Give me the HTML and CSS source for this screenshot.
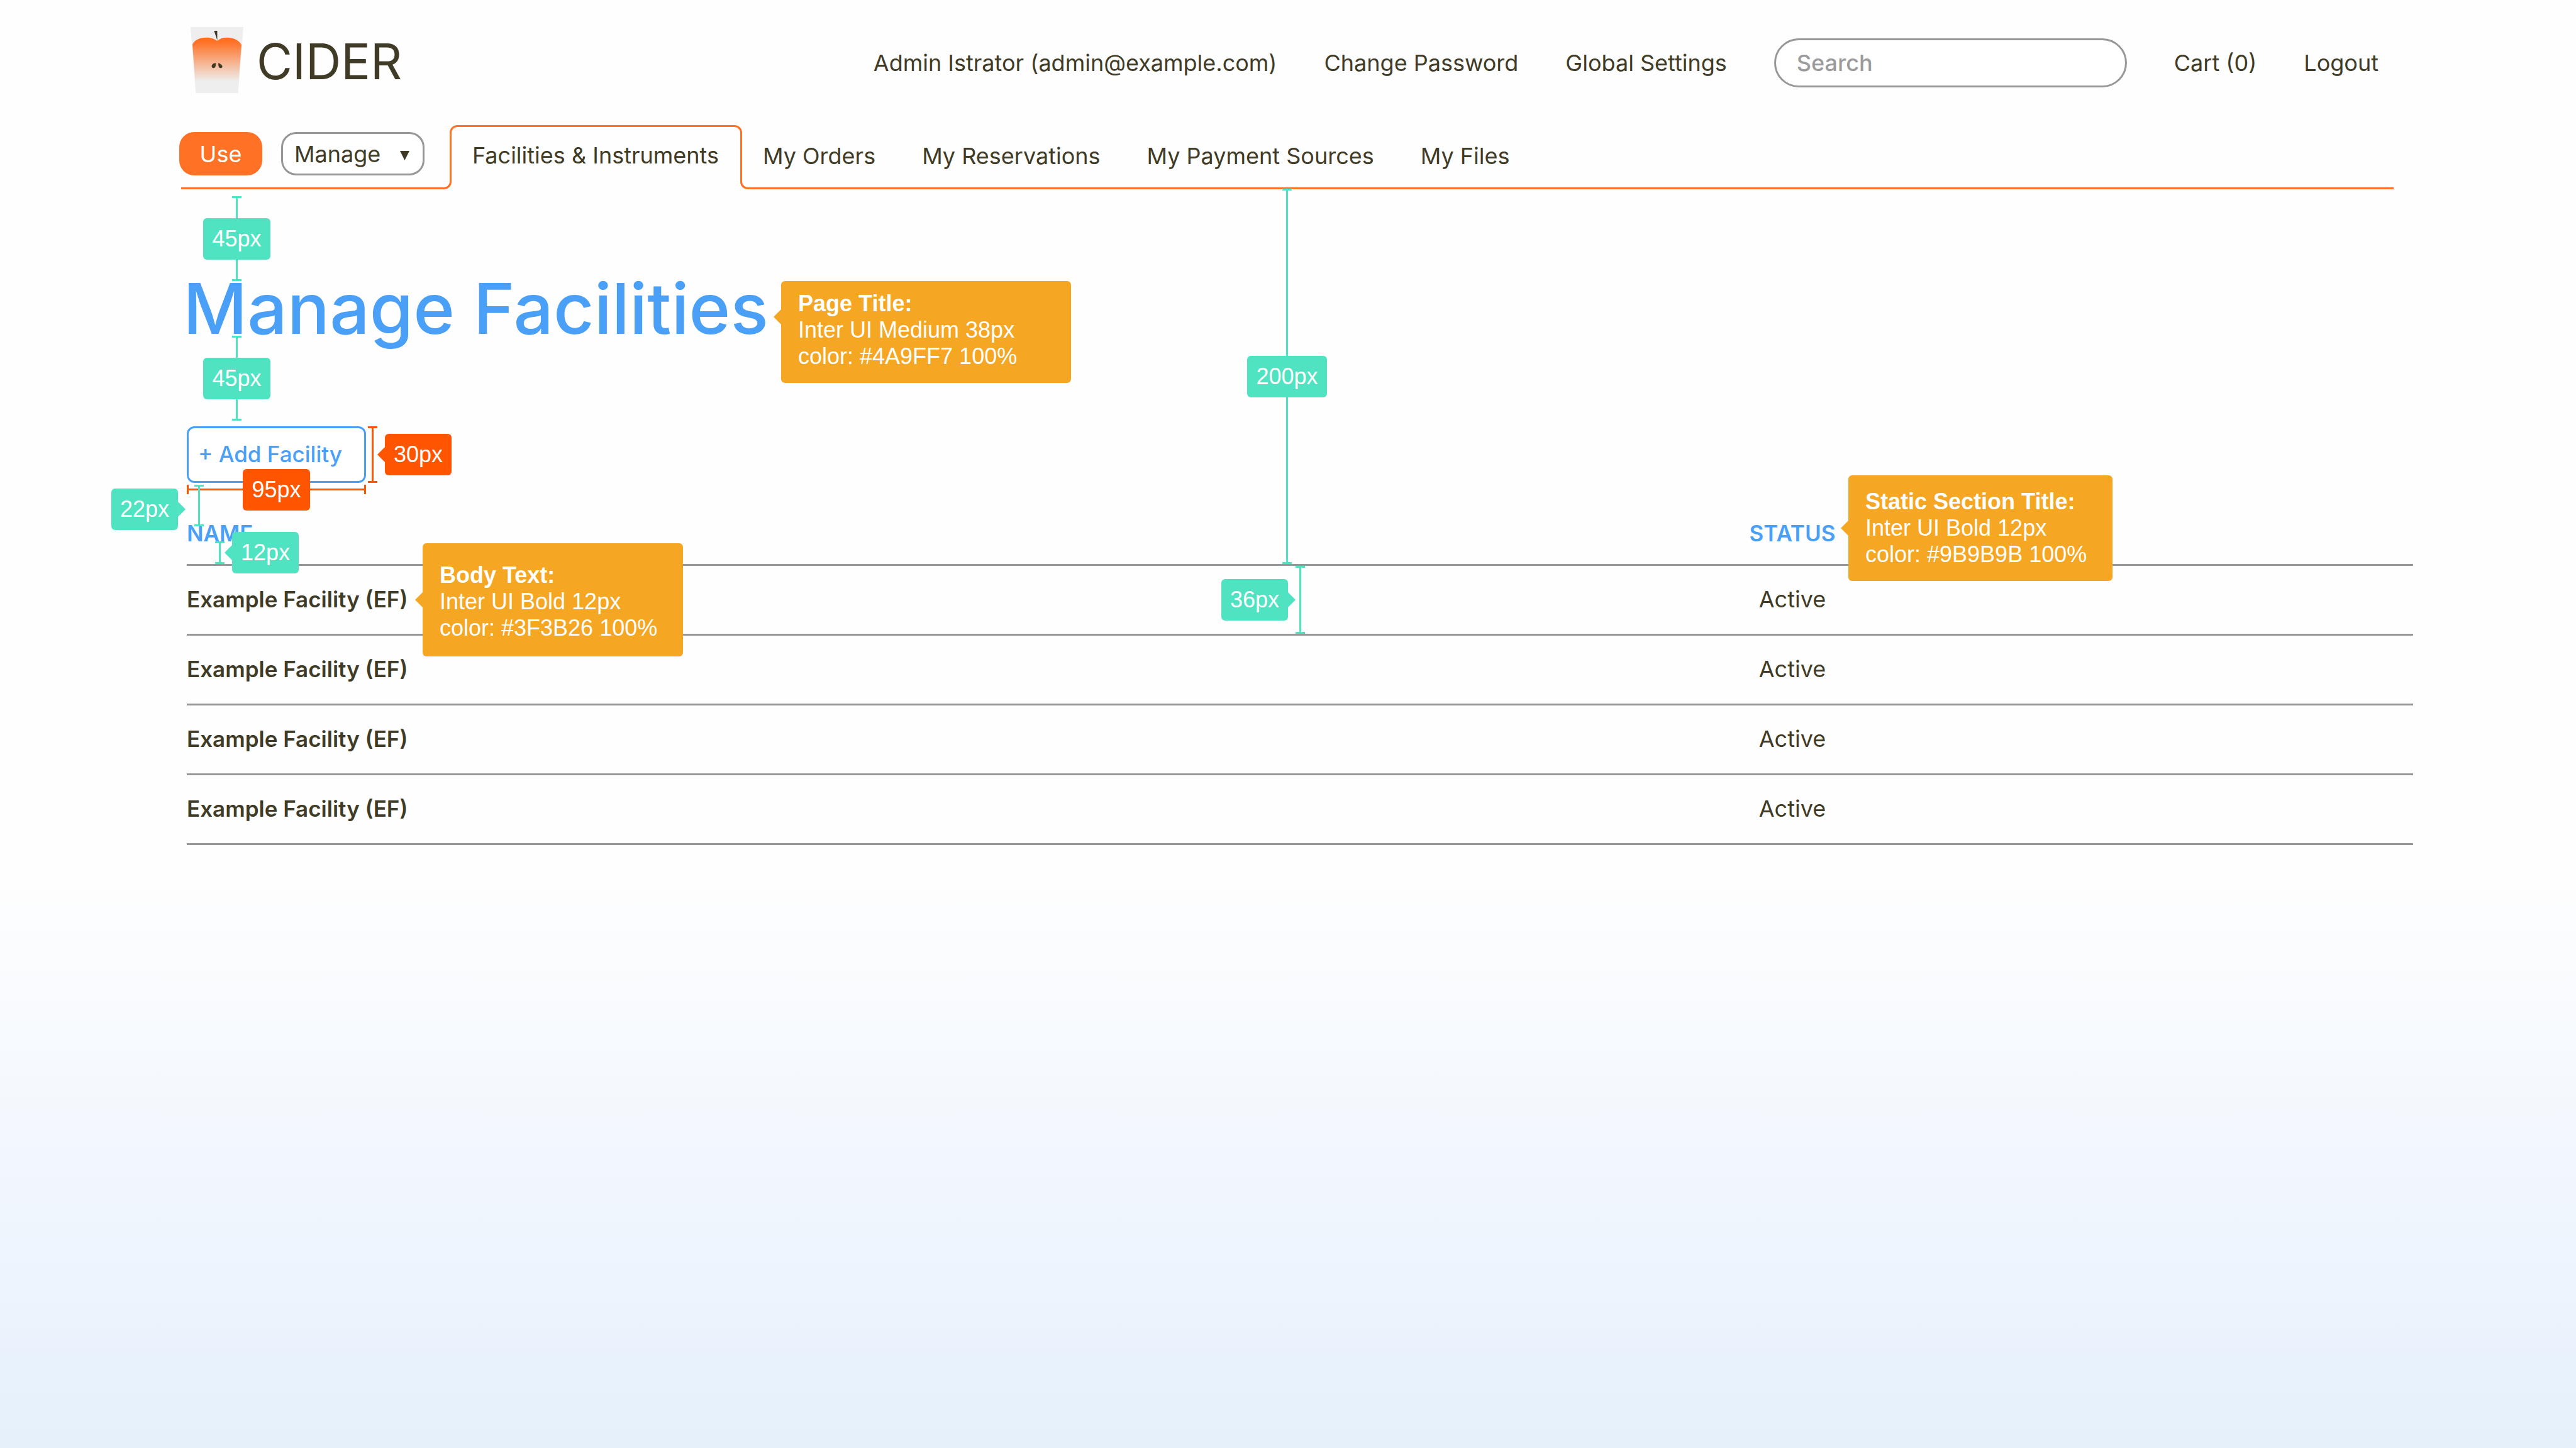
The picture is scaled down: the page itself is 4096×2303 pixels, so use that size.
FILE: index.html
```html
<!DOCTYPE html>
<html lang="en">
<head>
<meta charset="utf-8">
<meta name="viewport" content="width=device-width, initial-scale=1">
<title>CIDER – Manage Facilities</title>
<link rel="stylesheet" href="styles.css">
</head>
<body>
<div class="page">
  <header class="header">
    <a class="brand" href="#">
      <svg class="brand-mark" viewBox="0 0 140 175" aria-hidden="true">
        <defs>
          <linearGradient id="juice" x1="0" y1="28" x2="0" y2="144" gradientUnits="userSpaceOnUse">
            <stop offset="0" stop-color="#ff6c1e"/>
            <stop offset="0.1" stop-color="#ff7226"/>
            <stop offset="1" stop-color="#eeeeee"/>
          </linearGradient>
        </defs>
        <path d="M0 0H140L126 175H14Z" fill="#eeeeee"/>
        <path d="M5 46C12 33 26 28 42 28C54 28 62 31 70.300 36.700C78 31 86 28 97 28C114 28 128 35 135 47L127.500 144H12Z" fill="url(#juice)"/>
        <path d="M62.300 10H70.700V35Z" fill="#3f3b26"/>
        <path d="M66 95.500C60 96 56 100 56 104C56 107 58.500 109 61.500 108.700C65.500 108.300 67.300 102 67 96.500C67 95.800 66.500 95.500 66 95.500Z" fill="#3f3b26"/>
        <path d="M74.700 95.500C80 98 84.300 101 84.300 104.500C84.300 107.500 82 109 79 108.700C75 108.300 73.300 102 73.500 96.500C73.600 95.700 74 95.300 74.700 95.500Z" fill="#3f3b26"/>
      </svg>
      <span class="brand-name">CIDER</span>
    </a>
    <nav class="account" aria-label="Account">
      <a href="#">Admin Istrator (admin@example.com)</a>
      <a href="#">Change Password</a>
      <a href="#">Global Settings</a>
      <input class="search" type="search" placeholder="Search" aria-label="Search">
      <a href="#">Cart (0)</a>
      <a href="#">Logout</a>
    </nav>
  </header>

  <nav class="tabs" aria-label="Main">
    <div class="tabs-lead">
      <button class="use" type="button">Use</button>
      <div class="mode">
        <select class="mode-select" aria-label="Mode"><option>Manage</option></select>
        <svg class="mode-arrow" viewBox="0 0 15 15" aria-hidden="true"><path d="M0 0H15L7.500 15Z" fill="#3f3b26"/></svg>
      </div>
    </div>
    <a class="tab-current" href="#" aria-current="page">Facilities &amp; Instruments</a>
    <div class="tabs-rest">
      <a href="#">My Orders</a>
      <a href="#">My Reservations</a>
      <a href="#">My Payment Sources</a>
      <a href="#">My Files</a>
    </div>
  </nav>

  <main class="main">
    <h1 class="title">Manage Facilities</h1>
    <button class="add" type="button">+ Add Facility</button>
    <table class="facilities">
      <colgroup><col class="col-name"><col class="col-status"><col></colgroup>
      <thead>
        <tr><th scope="col">NAME</th><th class="status" scope="col">STATUS</th><td></td></tr>
      </thead>
      <tbody>
        <tr><th scope="row">Example Facility (EF)</th><td class="status">Active</td><td></td></tr>
        <tr><th scope="row">Example Facility (EF)</th><td class="status">Active</td><td></td></tr>
        <tr><th scope="row">Example Facility (EF)</th><td class="status">Active</td><td></td></tr>
        <tr><th scope="row">Example Facility (EF)</th><td class="status">Active</td><td></td></tr>
      </tbody>
    </table>
  </main>

  <!-- Design annotations laid over the page -->
  <aside class="specs" aria-label="Design annotations">
    <div class="measure m-title-top"><span class="tag">45px</span></div>
    <div class="measure m-title-bottom"><span class="tag">45px</span></div>
    <div class="measure m-content"><span class="tag">200px</span></div>
    <div class="measure m-row"><span class="tag tag-left">36px</span></div>
    <div class="measure size m-add-height"><span class="tag tag-right">30px</span></div>
    <div class="measure size across m-add-width"><span class="tag">95px</span></div>
    <div class="measure m-add-bottom"></div>
    <span class="tag tag-left t-add-bottom">22px</span>
    <div class="measure m-name"><span class="tag tag-right">12px</span></div>
    <p class="note n-title"><b>Page Title:</b><br>Inter UI Medium 38px<br>color: #4A9FF7 100%</p>
    <p class="note n-body"><b>Body Text:</b><br>Inter UI Bold 12px<br>color: #3F3B26 100%</p>
    <p class="note n-section"><b>Static Section Title:</b><br>Inter UI Bold 12px<br>color: #9B9B9B 100%</p>
  </aside>
</div>
</body>
</html>
```
FILE: styles.css
```css
:root {
  --ink: #3f3b26;
  --orange: #ff7226;
  --blue: #4a9ff7;
  --gray: #979797;
  --teal: #50e3c2;
  --red: #ff5500;
  --amber: #f5a623;
}

*,
*::before,
*::after { box-sizing: border-box; }

body {
  margin: 0;
  color: var(--ink);
  font: 36px/42px Inter, "Liberation Sans", sans-serif;
}

a { color: inherit; text-decoration: none; white-space: nowrap; }
button, input, select { font: inherit; color: inherit; margin: 0; }

.page {
  position: relative;
  min-height: 100vh;
  background: linear-gradient(#fefefe 0%, #fefefe 60%, #f2f7fe 80%, #e5f0fb 100%);
}

/* Header */
.header {
  display: flex;
  align-items: center;
  justify-content: space-between;
  height: 199px;
  padding: 0 314px 0 303px;
}

.brand { display: flex; align-items: center; gap: 21px; padding-bottom: 9px; }
.brand-mark { width: 84px; height: 105px; }
.brand-name {
  padding-top: 6px;
  font-size: 78px;
  line-height: 92px;
  font-optical-sizing: none;
}

.account { display: flex; align-items: center; gap: 75px; }

.search {
  width: 561px;
  height: 78px;
  padding: 0 33px;
  border: 3px solid var(--gray);
  border-radius: 39px;
  background: #fff;
  appearance: none;
}
.search::placeholder { color: #9b9b9b; font-weight: 500; opacity: 1; }

/* Tabs */
.tabs { display: flex; height: 102px; padding: 0 290px 0 288px; }

.tabs-lead {
  display: flex;
  gap: 30px;
  width: 418px;
  padding-top: 11px;
  border-bottom: 3px solid var(--orange);
}

.use {
  flex: none;
  width: 132px;
  height: 69px;
  margin-left: -3px;
  padding: 0;
  border: 0;
  border-radius: 24px;
  background: var(--orange);
  color: #fff;
}

.mode { position: relative; width: 228px; height: 69px; }
.mode-select {
  width: 100%;
  height: 100%;
  padding: 0 18px;
  border: 3px solid var(--gray);
  border-radius: 24px;
  background: #fff;
  appearance: none;
}
.mode-arrow {
  position: absolute;
  top: 30px;
  right: 24px;
  width: 15px;
  height: 15px;
  pointer-events: none;
}

.tab-current {
  position: relative;
  margin: 0 9px 12px;
  padding: 24px 34px 0 33px;
  border: 3px solid var(--orange);
  border-bottom: 0;
  border-radius: 12px 12px 0 0;
}
.tab-current::before,
.tab-current::after {
  content: "";
  position: absolute;
  bottom: -12px;
  width: 12px;
  height: 12px;
  border-bottom: 3px solid var(--orange);
}
.tab-current::before {
  left: -12px;
  border-right: 3px solid var(--orange);
  border-bottom-right-radius: 12px;
}
.tab-current::after {
  right: -12px;
  border-left: 3px solid var(--orange);
  border-bottom-left-radius: 12px;
}

.tabs-rest {
  flex: 1;
  display: flex;
  align-items: center;
  gap: 74px;
  padding: 0 0 2px 24px;
  border-bottom: 3px solid var(--orange);
}

/* Content */
.main { padding: 120px 259px 0 297px; }

.title {
  margin: 0 0 119px -6px;
  color: var(--blue);
  font-size: 112px;
  font-weight: 500;
  line-height: 138px;
}

.add {
  display: block;
  width: 285px;
  height: 90px;
  padding: 0 0 2px 15px;
  border: 3px solid var(--blue);
  border-radius: 12px;
  background: #fff;
  color: var(--blue);
  font-size: 35px;
  font-weight: 500;
  text-align: left;
}

.facilities {
  width: 100%;
  table-layout: fixed;
  border-collapse: separate;
  border-spacing: 0;
}
.col-name { width: 70%; }
.col-status { width: 150px; }
.facilities th { text-align: left; font-size: 35px; font-weight: 600; }
.facilities th,
.facilities td { padding: 32px 0 34px; border-bottom: 3px solid var(--gray); }
.facilities thead th { padding: 59px 0 28px; color: var(--blue); }
.facilities .status { text-align: center; }

/* Annotations */
.specs {
  position: absolute;
  inset: 0;
  pointer-events: none;
  color: #fff;
  font-family: "Liberation Sans", Arial, sans-serif;
}

.measure {
  --mark: var(--teal);
  position: absolute;
  display: flex;
  align-items: center;
  justify-content: center;
  width: 15px;
  border: solid var(--mark);
  border-width: 3px 0;
  background: linear-gradient(var(--mark), var(--mark)) center / 3px 100% no-repeat;
}
.measure.size { --mark: var(--red); }
.measure.across {
  height: 15px;
  border-width: 0 3px;
  background-size: 100% 3px;
}

.tag {
  flex: none;
  padding: 12px 14px;
  border-radius: 6px;
  background: var(--mark, var(--teal));
}
.tag-left,
.tag-right { position: absolute; }
.tag-left { right: calc(100% + 12px); }
.tag-right { left: calc(100% + 12px); }

.tag-left::after,
.tag-right::before,
.note::before {
  content: "";
  position: absolute;
  width: 12px;
  height: 24px;
  background: inherit;
}
.tag-left::after,
.tag-right::before { top: calc(50% - 12px); }
.tag-left::after { left: 100%; clip-path: polygon(0 0, 100% 50%, 0 100%); }
.tag-right::before,
.note::before { right: 100%; clip-path: polygon(100% 0, 0 50%, 100% 100%); }

.note {
  position: absolute;
  margin: 0;
  padding-left: 27px;
  border-radius: 6px;
  background: var(--amber);
  white-space: nowrap;
}

.m-title-top { left: 369px; top: 312px; height: 135px; }
.m-title-bottom { left: 369px; top: 534px; height: 135px; }
.m-content { left: calc(50% - 9px); top: 300px; height: 597px; }
.m-row { left: calc(50% + 12px); top: 900px; height: 108px; }
.m-add-height { left: 585px; top: 678px; height: 90px; }
.m-add-width { left: 297px; top: 771px; width: 285px; }
.m-add-bottom { left: 309px; top: 771px; height: 66px; }
.t-add-bottom { left: 177px; right: auto; top: 777px; }
.m-name { left: 342px; top: 861px; height: 36px; }

.n-title { left: 1242px; top: 447px; width: 461px; height: 162px; padding-top: 15px; }
.n-title::before { top: 45px; }
.n-body { left: 672px; top: 864px; width: 414px; height: 180px; padding-top: 30px; }
.n-body::before { top: 78px; }
.n-section { left: 2939px; top: 756px; width: 420px; height: 168px; padding-top: 21px; }
.n-section::before { top: 72px; }
```
